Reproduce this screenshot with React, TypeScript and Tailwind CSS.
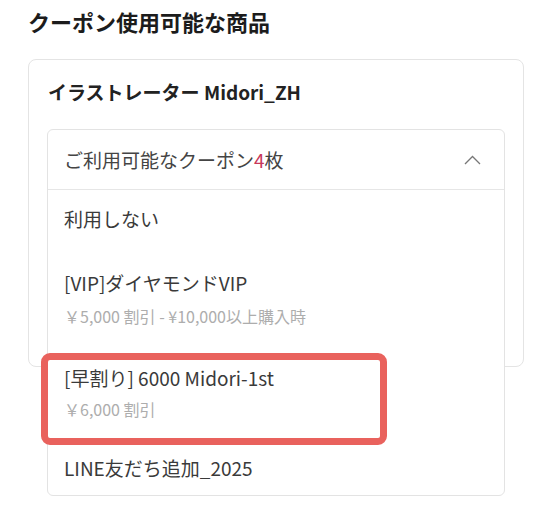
import React from "react";

const font = { fontFamily: '"Noto Sans CJK JP", "Noto Sans", sans-serif' };

export default function App() {
  return (
    <div className="relative w-[553px] h-[527px] bg-white overflow-hidden" style={font}>
      <div className="pl-[28px] pt-[6px]">
        <h1 className="text-[22px] leading-[30px] font-bold text-[#1c1c1c]">クーポン使用可能な商品</h1>
      </div>
      <div className="mt-[23px] ml-[28px] w-[496px] h-[308px] rounded-[8px] border border-[#e4e4e4] px-[18px] pt-[18px]">
        <div className="text-[19px] leading-[28px] font-bold text-[#222] pl-[1px]">イラストレーター Midori_ZH</div>
        <div className="mt-[23px] rounded-[6px] border border-[#e3e3e3] bg-white">
          <div className="h-[60px] flex items-center justify-between pl-[16px] pr-[23px] border-b border-[#e6e6e6]">
            <span className="text-[19px] leading-[28px] text-[#444]">
              ご利用可能なクーポン<span className="text-[#c8385a]">4</span>枚
            </span>
            <svg width="17" height="10" viewBox="0 0 17 10" fill="none">
              <path d="M1 9 L8.5 1.5 L16 9" stroke="#777" strokeWidth="1.3" />
            </svg>
          </div>
          <div className="px-[16px] text-[#3a3a3a]">
            <div className="pt-[15px] pb-[14px] text-[19px] leading-[28px]">利用しない</div>
            <div className="pt-[22px] pb-[16px]">
              <div className="text-[19px] leading-[28px]">[VIP]ダイヤモンドVIP</div>
              <div className="mt-[9px] text-[16px] leading-[20px] text-[#adadad]">￥5,000 割引 - ¥10,000以上購入時</div>
            </div>
            <div className="pt-[22px] pb-[21px]">
              <div className="text-[19px] leading-[28px]">[早割り] 6000 Midori-1st</div>
              <div className="mt-[7px] text-[16px] leading-[20px] text-[#adadad]">￥6,000 割引</div>
            </div>
            <div className="pt-[14px] pb-[13px] text-[19px] leading-[28px]">LINE友だち追加_2025</div>
          </div>
        </div>
      </div>
      <div className="absolute left-[41px] top-[353px] w-[346px] h-[92px] rounded-[9px] border-[7px] border-[#e9625d]" />
    </div>
  );
}
